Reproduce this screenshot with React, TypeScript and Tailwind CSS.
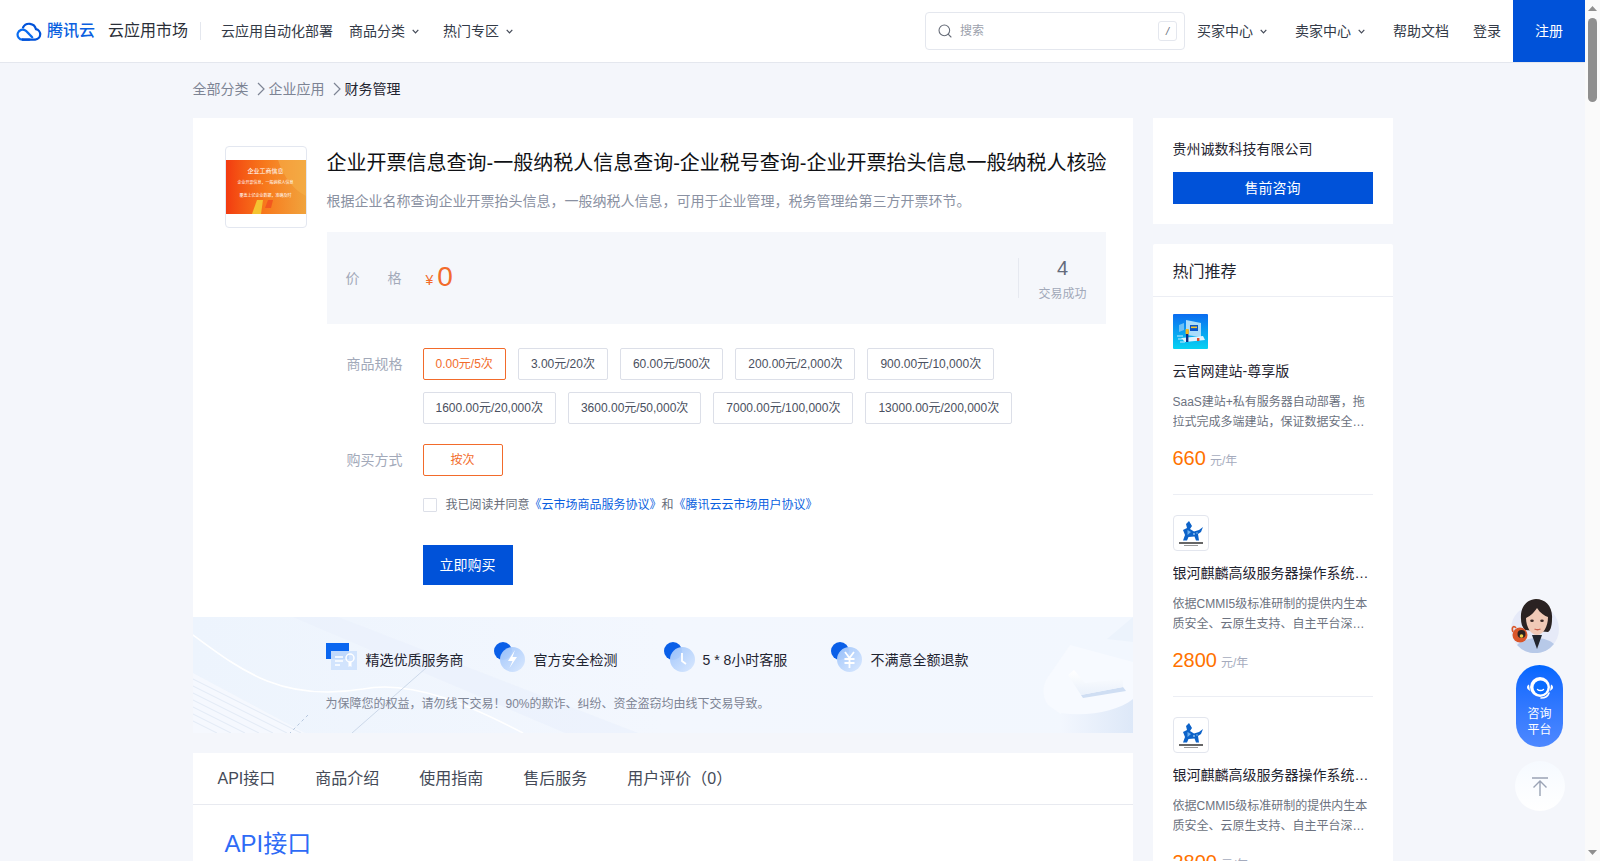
import React from "react";
import { Search } from "lucide-react";

const SPECS1 = ["0.00元/5次", "3.00元/20次", "60.00元/500次", "200.00元/2,000次", "900.00元/10,000次"];
const SPECS2 = ["1600.00元/20,000次", "3600.00元/50,000次", "7000.00元/100,000次", "13000.00元/200,000次"];

function SmallChevron() {
  return (
    <svg width="7" height="5" viewBox="0 0 7 5" fill="none" className="ml-[7px] mt-[1px] shrink-0">
      <path d="M0.7 0.8 3.5 3.8 6.3 0.8" stroke="#444a57" strokeWidth="1.2" />
    </svg>
  );
}

function NavItem({ label, menu, className = "" }: { label: string; menu?: boolean; className?: string }) {
  return (
    <div className={"flex items-center text-sm text-[#333a47] " + className}>
      <span>{label}</span>
      {menu && <SmallChevron />}
    </div>
  );
}

function CrumbChevron() {
  return (
    <svg width="8" height="14" viewBox="0 0 8 14" fill="none" className="ml-2 mr-1 shrink-0">
      <path d="M1 1 7 7 1 13" stroke="#7d8494" strokeWidth="1.2" />
    </svg>
  );
}

function Spec({ label, active, w }: { label: string; active?: boolean; w?: string }) {
  return (
    <div
      className={
        "flex h-8 items-center justify-center rounded-[2px] border px-3 text-xs " +
        (active ? "border-[#f26b2b] text-[#f26b2b] " : "border-[#dcdfe8] text-[#4a5060] ") +
        (w ?? "")
      }
    >
      {label}
    </div>
  );
}

function CloudLogo() {
  return (
    <svg width="26" height="20" viewBox="0 0 26 20" fill="none" className="shrink-0">
      <path
        d="M6.6 18.6h12.6a5.3 5.3 0 0 0 .7-10.5A6.9 6.9 0 0 0 7 6.6"
        stroke="#0052d9"
        strokeWidth="2.2"
        strokeLinecap="round"
      />
      <path
        d="M6.6 18.6a5 5 0 1 1 3-9c1.6 1.2 4.6 4.6 6.6 6.6"
        stroke="#0a6cf0"
        strokeWidth="2.2"
        strokeLinecap="round"
      />
      <path d="M6.6 18.6h6.8" stroke="#0052d9" strokeWidth="2.2" strokeLinecap="round" />
    </svg>
  );
}

function BannerArt() {
  return (
    <svg className="absolute inset-0 h-full w-full" viewBox="0 0 940 116" preserveAspectRatio="none" fill="none">
      <defs>
        <linearGradient id="bannerBg" x1="0" y1="0" x2="1" y2="0">
          <stop offset="0" stopColor="#edf4fd" />
          <stop offset="0.5" stopColor="#f3f7fe" />
          <stop offset="1" stopColor="#f2f7fe" />
        </linearGradient>
        <linearGradient id="blockBg" x1="0" y1="0" x2="1" y2="0">
          <stop offset="0" stopColor="#f3f7fe" />
          <stop offset="1" stopColor="#dde8f8" />
        </linearGradient>
        <linearGradient id="checkArm" x1="0" y1="0" x2="0" y2="1">
          <stop offset="0" stopColor="#ffffff" />
          <stop offset="1" stopColor="#eaf1fb" />
        </linearGradient>
      </defs>
      <rect width="940" height="116" fill="url(#bannerBg)" />
      <path d="M100 0 L145 0 L445 116 L372 116 Z" fill="#e9f0fb" opacity="0.6" />
      <path d="M0 18 C50 55 90 85 170 72 C220 62 280 90 330 116" stroke="#ffffff" strokeWidth="1.6" />
      <path d="M0 56 L112 116 L0 116 Z" fill="#f6f9fe" opacity="0.8" />
      {[62, 69, 76, 83, 90, 97, 104].map((y) => (
        <path key={y} d={`M0 ${y} L${(116 - y) * 2} 116`} stroke="#dbe4f1" strokeWidth="0.7" />
      ))}
      <path d="M159 116 L233 51" stroke="#c3d0e3" strokeWidth="0.8" />
      <path d="M115 98 L97 116" stroke="#b6c7de" strokeWidth="1" strokeDasharray="3 3" />
      <path d="M940 0 V25 L914 22 Z" fill="#ecf3fc" />
      <path d="M877 28 L940 45 V88 C925 95 895 100 872 100 L855 88 C849 80 849 68 855 60 Z" fill="#f7faff" />
      <path d="M868 96 C895 100 925 94 940 82 V116 H867 Z" fill="url(#blockBg)" />
      <path d="M888 78 L930 70 L933 74 L890 81 Z" fill="#cfdef3" />
      <path d="M875 58 L881 53 L892 66 L930 62 L930 70 L888 78 Z" fill="url(#checkArm)" />
    </svg>
  );
}

function BadgeIcon({ kind }: { kind: "cert" | "bolt" | "clock" | "yen" }) {
  if (kind === "cert") {
    return (
      <svg width="32" height="28" viewBox="0 0 32 28" className="shrink-0">
        <rect x="0" y="0" width="23" height="16" fill="#0a66f0" />
        <rect x="5" y="8" width="26" height="19" fill="#cfe2fd" opacity="0.92" />
        <path d="M9 14h8M9 18h8M9 22h5" stroke="#fff" strokeWidth="1.6" />
        <circle cx="24" cy="15" r="4" fill="none" stroke="#fff" strokeWidth="1.5" />
        <path d="M22.5 19v5l1.5-1 1.5 1v-5" fill="#fff" />
      </svg>
    );
  }
  return (
    <svg width="31" height="30" viewBox="0 0 31 30" className="shrink-0">
      <defs>
        <linearGradient id={"round" + kind} x1="0" y1="0" x2="1" y2="1">
          <stop offset="0" stopColor="#9ec4fb" />
          <stop offset="1" stopColor="#d9e8fe" />
        </linearGradient>
      </defs>
      <circle cx="9" cy="9" r="9" fill="#0a5fe8" />
      <circle cx="18.5" cy="17.5" r="12.5" fill={"url(#round" + kind + ")"} opacity="0.95" />
      {kind === "bolt" && <path d="M21 8 L14 19 H18.5 L15.5 26 L23 15 H18.5 Z" fill="#fff" />}
      {kind === "clock" && <path d="M18 11 V19 L22 22" stroke="#fff" strokeWidth="1.8" fill="none" />}
      {kind === "yen" && <path d="M14 10 L18.5 16 L23 10 M13.5 17h10M13.5 21h10M18.5 16v10" stroke="#fff" strokeWidth="1.8" fill="none" />}
    </svg>
  );
}

function Assurance({ kind, text, gap, width }: { kind: "cert" | "bolt" | "clock" | "yen"; text: string; gap: string; width: string }) {
  return (
    <div className={"flex items-center " + gap + " " + width}>
      <BadgeIcon kind={kind} />
      <span className="pt-[6px] text-sm text-[#1f2430]">{text}</span>
    </div>
  );
}

function SiteIcon() {
  return (
    <svg width="35" height="35" viewBox="0 0 35 35" className="block">
      <defs>
        <linearGradient id="siteBg" x1="0" y1="0" x2="0" y2="1">
          <stop offset="0" stopColor="#0b6cf0" />
          <stop offset="1" stopColor="#06d3f2" />
        </linearGradient>
      </defs>
      <rect width="35" height="35" rx="1" fill="url(#siteBg)" />
      <path d="M13 6 L28 9 V23 L13 21 Z" fill="#a9dcfb" />
      <rect x="17" y="11" width="8" height="6" fill="#0a55c8" />
      <rect x="18" y="12.5" width="6" height="1.6" fill="#f4c430" />
      <path d="M6 11 L11 9 V16 L6 18 Z" fill="#6cc0f6" />
      <path d="M8 24 L30 22 L32 26 L12 28 Z" fill="#dff3fe" />
      <rect x="13" y="16" width="2.4" height="12" fill="#0b2f86" />
      <rect x="12.6" y="15" width="3.2" height="5" fill="#f4b81f" />
      <rect x="24" y="24" width="2.4" height="3" fill="#e5482a" />
      <path d="M4 22h6M5 25h4M7 28h5" stroke="#c7edff" strokeWidth="1" />
    </svg>
  );
}

function KylinIcon() {
  return (
    <div className="flex h-[36px] w-[36px] flex-col items-center justify-center overflow-hidden rounded-[4px] border border-[#e3e6ee] bg-white">
      <svg width="24" height="20" viewBox="0 0 24 20">
        <path
          d="M10 0 L13 5 L11 8 L15 10.5 L20 9 L24 6 L22 11 L19 13 L20 19.5 L17 19.5 L15.5 15.5 L9.5 16 L8 19.5 L4 19.5 L6 14 L4 9 L8 7 L7 3 Z"
          fill="#0d63c9"
        />
        <path d="M8.5 9 L12 11 L8.5 14 Z" fill="#6fb1ee" />
        <circle cx="15" cy="13" r="0.9" fill="#9bcaf2" />
        <circle cx="18" cy="12" r="0.7" fill="#9bcaf2" />
      </svg>
      <div className="mt-[1px] h-[2px] w-[24px] bg-[#666]" />
      <div className="mt-[1px] h-[1px] w-[14px] bg-[#999]" />
    </div>
  );
}

function Recommend({
  icon,
  name,
  desc,
  price,
  first,
  last,
}: {
  icon: React.ReactNode;
  name: string;
  desc: string;
  price: string;
  first?: boolean;
  last?: boolean;
}) {
  return (
    <div className={"mx-5 " + (first ? "h-[198px] pt-[17px] " : "h-[202px] pt-[20px] ") + (last ? "" : "border-b border-[#eceef4]")}>
      <div className="h-[35px] w-[36px]">{icon}</div>
      <div className={"truncate text-sm leading-[20px] text-[#1f2430] " + (first ? "mt-[12px]" : "mt-[13px]")}>{name}</div>
      <div className="mt-[11px] line-clamp-2 text-xs leading-[20px] text-[#6c7280]">{desc}</div>
      <div className="mt-[13px] flex items-baseline">
        <span className="text-[20px] leading-[26px] text-[#ff7200]">{price}</span>
        <span className="ml-[4px] text-xs text-[#a5abbd]">元/年</span>
      </div>
    </div>
  );
}

function OrangeThumb() {
  return (
    <div className="flex h-[82px] w-[82px] shrink-0 items-center rounded-[4px] border border-[#e3e7f0] bg-white">
      <div className="relative flex h-[54px] w-full flex-col items-center overflow-hidden bg-gradient-to-r from-[#f23a10] via-[#f77a1c] to-[#f0a33c] text-white">
        <svg className="absolute inset-0 h-full w-full" viewBox="0 0 80 54" fill="none">
          <path d="M26 54 L31 40 L37 40 L35 54 Z" fill="#f4c331" />
          <path d="M39 48 L42 40 L47 40 L45 48 Z" fill="#f2581f" />
          <path d="M52 0 C58 18 68 30 80 36 V0 Z" fill="#f6b04a" opacity="0.55" />
        </svg>
        <div className="relative mt-[7px] text-[6px] leading-[9px]">企业工商信息</div>
        <div className="relative mt-[3px] whitespace-nowrap text-[4px] leading-[8px]">企业开票信息，一般纳税人信息</div>
        <div className="relative mt-[5px] whitespace-nowrap text-[4px] leading-[8px]">覆盖上亿企业数据，准确及时</div>
      </div>
    </div>
  );
}

function HeadsetIcon() {
  return (
    <svg width="28" height="26" viewBox="0 0 28 26" fill="none">
      <circle cx="14" cy="12" r="10" fill="#ffffff" />
      <circle cx="14.5" cy="12.5" r="7" fill="#0a6cff" />
      <path d="M11.5 14.5c1.5 1.4 4.5 1.4 6 0" stroke="#fff" strokeWidth="1.4" strokeLinecap="round" />
      <path d="M3 9.5a3 3 0 0 0-1.5 4.5L4 16Z" fill="#fff" />
      <path d="M25 9.5a3 3 0 0 1 1.5 4.5L24 16Z" fill="#fff" />
      <path d="M23 18c-1 3-4 5-8 5" stroke="#fff" strokeWidth="1.6" strokeLinecap="round" />
    </svg>
  );
}

function Avatar() {
  return (
    <svg width="48" height="54" viewBox="0 0 48 54">
      <defs>
        <filter id="soft">
          <feGaussianBlur stdDeviation="0.35" />
        </filter>
      </defs>
      <circle cx="24" cy="30" r="24" fill="#e6eaf8" />
      <g filter="url(#soft)">
        <path d="M6 46 C10 42 18 39 25 39 C33 39 40 42 43 45 A24 24 0 0 1 6 46 Z" fill="#b7c9e8" />
        <path d="M21 36 L31 36 L26 50 Z" fill="#23262e" />
        <path d="M10 20 C9 6 18 0 25 0 C34 0 42 7 41 20 C41 28 39 32 37 33 L14 31 C11 28 10 24 10 20 Z" fill="#2a2220" />
        <path d="M15 19 C20 17 24 12 26 9 C29 14 34 17 37 18 C37 28 32 36 26 36 C20 36 15 28 15 19 Z" fill="#f0c9b6" />
        <ellipse cx="21" cy="21.8" rx="1.8" ry="1.2" fill="#3a2a26" />
        <ellipse cx="31" cy="21.8" rx="1.8" ry="1.2" fill="#3a2a26" />
        <path d="M23.5 30c2 1 4 1 6 0" stroke="#c9604e" strokeWidth="1.3" fill="none" />
        <circle cx="9" cy="36" r="7.5" fill="#d9572b" />
        <circle cx="10.5" cy="35" r="4" fill="#2a2220" />
        <circle cx="10.5" cy="37" r="1.8" fill="#f2d24a" />
        <path d="M2 33 C0 28 3 26 5 29" stroke="#d9572b" strokeWidth="1.6" fill="none" />
      </g>
    </svg>
  );
}

function ScrollArrow({ down }: { down?: boolean }) {
  return (
    <div className="flex h-[17px] items-center justify-center">
      <svg width="9" height="5" viewBox="0 0 9 5">
        <path d={down ? "M0 0H9L4.5 5Z" : "M0 5H9L4.5 0Z"} fill="#8f8f8f" />
      </svg>
    </div>
  );
}

const SAAS = "SaaS建站+私有服务器自动部署，拖拉式完成多端建站，保证数据安全可靠，支持多种终端访问与管理";
const KYLIN = "依据CMMI5级标准研制的提供内生本质安全、云原生支持、自主平台深入优化、高性能、易管理的操作系统";

export default function App() {
  return (
    <div
      className="relative flex h-[861px] w-full overflow-hidden bg-[#f4f6fb] text-[#1f2430]"
      style={{ fontFamily: '"Liberation Sans","Noto Sans CJK SC",sans-serif' }}
    >
      <div className="flex min-w-0 flex-1 flex-col overflow-hidden">
        <header className="flex h-[63px] shrink-0 items-center border-b border-[#e4e7ee] bg-white pl-4">
          <CloudLogo />
          <span className="ml-[5px] text-base font-medium text-[#0a5fe0]">腾讯云</span>
          <span className="ml-[13px] text-base text-[#2b2f38]">云应用市场</span>
          <span className="ml-3 h-[18px] w-px bg-[#e4e7ee]" />
          <NavItem label="云应用自动化部署" className="ml-5" />
          <NavItem label="商品分类" menu className="ml-4" />
          <NavItem label="热门专区" menu className="ml-6" />
          <div className="ml-auto flex h-[38px] w-[260px] items-center rounded-[4px] border border-[#e4e7ee] bg-white pl-[11px] pr-[7px]">
            <Search className="h-[16px] w-[16px] text-[#666c78]" strokeWidth={1.6} />
            <span className="ml-[7px] text-xs text-[#9ca1ac]">搜索</span>
            <span className="ml-auto flex h-5 w-[19px] items-center justify-center rounded-[3px] border border-[#e4e7ee] text-[11px] italic text-[#666c78]">
              /
            </span>
          </div>
          <NavItem label="买家中心" menu className="ml-3" />
          <NavItem label="卖家中心" menu className="ml-7" />
          <NavItem label="帮助文档" className="ml-7" />
          <NavItem label="登录" className="ml-6" />
          <div className="ml-3 flex h-[62px] w-[72px] items-center justify-center self-start bg-[#0052d9] text-sm text-white">
            注册
          </div>
        </header>

        <main className="mx-auto w-[1200px] shrink-0">
          <div className="flex h-[55px] items-center pb-[4px] text-sm text-[#7d8494]">
            <span>全部分类</span>
            <CrumbChevron />
            <span>企业应用</span>
            <CrumbChevron />
            <span className="text-[#1f2430]">财务管理</span>
          </div>

          <div className="flex items-start gap-5">
            <div className="w-[940px] shrink-0">
              <section className="flex h-[499px] bg-white pl-[32px] pt-[28px] pr-[27px]">
                <OrangeThumb />
                <div className="ml-[20px] min-w-0 flex-1">
                  <h1 className="whitespace-nowrap text-[20px] font-normal leading-[34px] text-[#0f1115]">
                    企业开票信息查询-一般纳税人信息查询-企业税号查询-企业开票抬头信息一般纳税人核验
                  </h1>
                  <p className="mt-[10px] text-sm leading-[22px] text-[#8a91a2]">
                    根据企业名称查询企业开票抬头信息，一般纳税人信息，可用于企业管理，税务管理给第三方开票环节。
                  </p>
                  <div className="mt-[20px] flex h-[92px] items-center bg-[#f5f7fb] pl-[19px] pr-[19px]">
                    <span className="w-[42px] text-sm text-[#a2a9b9]">价</span>
                    <span className="w-[38px] text-sm text-[#a2a9b9]">格</span>
                    <span className="mt-[3px] text-sm text-[#f26b2b]">¥</span>
                    <span className="mb-[2px] ml-[4px] text-[28px] leading-none text-[#f26b2b]">0</span>
                    <div className="ml-auto h-10 w-px bg-[#e6e9f0]" />
                    <div className="ml-[19px] flex flex-col items-center">
                      <span className="text-[20px] leading-[26px] text-[#646b7b]">4</span>
                      <span className="mt-[5px] text-xs text-[#a2a9b9]">交易成功</span>
                    </div>
                  </div>

                  <div className="mt-6 flex">
                    <span className="ml-[20px] w-[76px] shrink-0 pt-[5px] text-sm leading-[22px] text-[#a2a9b9]">商品规格</span>
                    <div className="flex flex-col gap-3">
                      <div className="flex gap-3">
                        {SPECS1.map((s, i) => (
                          <Spec key={s} label={s} active={i === 0} />
                        ))}
                      </div>
                      <div className="flex gap-3">
                        {SPECS2.map((s) => (
                          <Spec key={s} label={s} />
                        ))}
                      </div>
                    </div>
                  </div>

                  <div className="mt-5 flex">
                    <span className="ml-[20px] w-[76px] shrink-0 pt-[5px] text-sm leading-[22px] text-[#a2a9b9]">购买方式</span>
                    <Spec label="按次" active w="w-[80px]" />
                  </div>

                  <div className="ml-[96px] mt-[21px] flex items-center text-xs">
                    <span className="h-[14px] w-[14px] rounded-[1px] border border-[#dcdfe8] bg-white" />
                    <span className="ml-[9px] text-[#666c78]">我已阅读并同意</span>
                    <span className="text-[#0a5fe0]">《云市场商品服务协议》</span>
                    <span className="text-[#666c78]">和</span>
                    <span className="text-[#0a5fe0]">《腾讯云云市场用户协议》</span>
                  </div>

                  <div className="ml-[96px] mt-[32px] flex h-10 w-[90px] items-center justify-center bg-[#0052d9] text-sm text-white">
                    立即购买
                  </div>
                </div>
              </section>

              <section className="relative h-[116px] overflow-hidden pl-[133px]">
                <BannerArt />
                <div className="relative flex pt-[25px]">
                  <Assurance kind="cert" text="精选优质服务商" gap="gap-[8px]" width="w-[168px]" />
                  <Assurance kind="bolt" text="官方安全检测" gap="gap-[9px]" width="w-[170px]" />
                  <Assurance kind="clock" text="5 * 8小时客服" gap="gap-[8px]" width="w-[167px]" />
                  <Assurance kind="yen" text="不满意全额退款" gap="gap-[9px]" width="w-[150px]" />
                </div>
                <p className="relative mt-[22px] text-xs leading-[20px] text-[#7d8494]">
                  为保障您的权益，请勿线下交易！90%的欺诈、纠纷、资金盗窃均由线下交易导致。
                </p>
              </section>

              <section className="mt-5 bg-white">
                <div className="flex h-[52px] items-center gap-10 border-b border-[#e8eaf0] pl-[25px] text-base text-[#444a57]">
                  <span>API接口</span>
                  <span>商品介绍</span>
                  <span>使用指南</span>
                  <span>售后服务</span>
                  <span>用户评价（0）</span>
                </div>
                <h2 className="pl-[32px] pt-[19px] text-[24px] font-normal leading-[40px] text-[#2e6bf6]">API接口</h2>
                <div className="h-[200px]" />
              </section>
            </div>

            <aside className="w-[240px] shrink-0">
              <div className="h-[106px] bg-white px-5 pt-[20px]">
                <div className="text-sm leading-[22px] text-[#1f2430]">贵州诚数科技有限公司</div>
                <div className="mt-[12px] flex h-8 items-center justify-center bg-[#0052d9] text-sm text-white">售前咨询</div>
              </div>
              <div className="mt-5 rounded-t-[2px] bg-white">
                <div className="flex h-[53px] items-center border-b border-[#eceef4] px-5 pt-[4px] text-base text-[#1f2430]">热门推荐</div>
                <Recommend first icon={<SiteIcon />} name="云官网建站-尊享版" desc={SAAS} price="660" />
                <Recommend icon={<KylinIcon />} name="银河麒麟高级服务器操作系统V10" desc={KYLIN} price="2800" />
                <Recommend last icon={<KylinIcon />} name="银河麒麟高级服务器操作系统V10" desc={KYLIN} price="2800" />
              </div>
            </aside>
          </div>
        </main>
      </div>

      <div className="flex w-[15px] shrink-0 flex-col justify-between bg-[#fafafa]">
        <div>
          <ScrollArrow />
          <div className="mx-auto mt-[1px] h-[84px] w-[9px] rounded-full bg-[#8f8f8f]" />
        </div>
        <ScrollArrow down />
      </div>

      <div className="absolute left-[1511px] top-[599px]">
        <Avatar />
      </div>
      <div className="absolute left-[1516px] top-[665px] flex h-[82px] w-[47px] flex-col items-center rounded-full bg-gradient-to-b from-[#0066ff] to-[#4d88ff] pt-[10px] text-xs leading-[16px] text-white">
        <HeadsetIcon />
        <span className="mt-[5px]">咨询</span>
        <span>平台</span>
      </div>
      <div className="absolute left-[1515px] top-[761px] flex h-[50px] w-[50px] items-center justify-center rounded-full bg-gradient-to-b from-[#f6faff] to-white">
        <svg width="18" height="19" viewBox="0 0 18 19" fill="none" stroke="#9aa3b5" strokeWidth="1.4">
          <path d="M1 1h16M9 19V4M2.5 10.5 9 4l6.5 6.5" />
        </svg>
      </div>
    </div>
  );
}
